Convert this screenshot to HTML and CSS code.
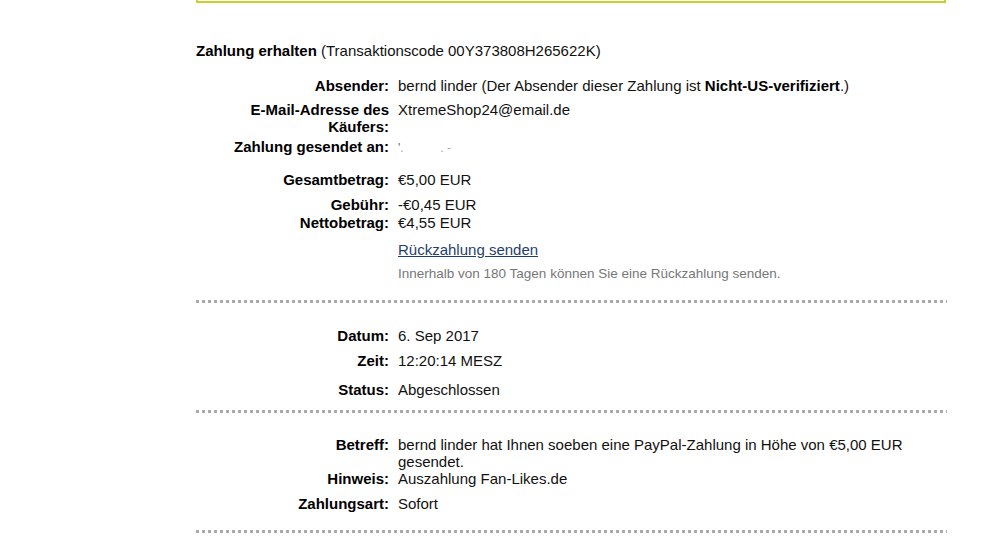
FILE: index.html
```html
<!DOCTYPE html>
<html lang="de">
<head>
<meta charset="utf-8">
<title>Zahlung erhalten</title>
<link rel="stylesheet" href="styles.css">
</head>
<body>
<div class="page">
  <div class="notice"></div>

  <h2 class="title"><strong>Zahlung erhalten</strong> (Transaktionscode 00Y373808H265622K)</h2>

  <section class="block first">
    <div class="row"><div class="label">Absender:</div><div class="value">bernd linder (Der Absender dieser Zahlung ist <strong>Nicht-US-verifiziert</strong>.)</div></div>
    <div class="row g7"><div class="label">E-Mail-Adresse des Käufers:</div><div class="value">XtremeShop24@email.de</div></div>
    <div class="row g3"><div class="label">Zahlung gesendet an:</div><div class="value"><span class="redacted">'</span><span class="redacted dots">.&nbsp;&nbsp;&nbsp;&nbsp;&nbsp;&nbsp;&nbsp;&nbsp;&nbsp;&nbsp;&nbsp;.&nbsp;-</span></div></div>
    <div class="row g14"><div class="label">Gesamtbetrag:</div><div class="value">€5,00 EUR</div></div>
    <div class="row g8"><div class="label">Gebühr:</div><div class="value">-€0,45 EUR</div></div>
    <div class="row g1"><div class="label">Nettobetrag:</div><div class="value">€4,55 EUR</div></div>
    <div class="row g10"><div class="label"></div><div class="value"><a class="link" href="#">Rückzahlung senden</a></div></div>
    <div class="row g7"><div class="label"></div><div class="value hint">Innerhalb von 180 Tagen können Sie eine Rückzahlung senden.</div></div>
  </section>

  <section class="block second">
    <div class="row"><div class="label">Datum:</div><div class="value">6. Sep 2017</div></div>
    <div class="row g8"><div class="label">Zeit:</div><div class="value">12:20:14 MESZ</div></div>
    <div class="row g12"><div class="label">Status:</div><div class="value">Abgeschlossen</div></div>
  </section>

  <section class="block third">
    <div class="row"><div class="label">Betreff:</div><div class="value">bernd linder hat Ihnen soeben eine PayPal-Zahlung in Höhe von €5,00 EUR gesendet.</div></div>
    <div class="row"><div class="label">Hinweis:</div><div class="value">Auszahlung Fan-Likes.de</div></div>
    <div class="row g8"><div class="label">Zahlungsart:</div><div class="value">Sofort</div></div>
  </section>
</div>
</body>
</html>
```

FILE: styles.css
```css
html, body {
  margin: 0;
  padding: 0;
  background: #fff;
}

body {
  font-family: "Liberation Sans", Arial, sans-serif;
  font-size: 15px;
  line-height: 17px;
  color: #111;
}

.page {
  width: 751px;
  margin-left: 196px;
}

.notice {
  width: 746px;
  height: 1px;
  border: 2px solid #c8d12c;
  border-top: 0;
}

.title {
  margin: 39px 0 0 0;
  font-size: 15px;
  line-height: 17px;
  font-weight: normal;
  color: #111;
}

.title strong {
  color: #000;
}

.block {
  background-image: linear-gradient(to right, #a9a9a9 3px, transparent 3px);
  background-size: 6px 3px;
  background-repeat: repeat-x;
  background-position: left bottom;
}

.block.first {
  padding-top: 18px;
  padding-bottom: 21px;
}

.block.second {
  padding-top: 24px;
  padding-bottom: 15px;
}

.block.third {
  padding-top: 23px;
  padding-bottom: 21px;
}

.row {
  display: grid;
  grid-template-columns: 193px 1fr;
  column-gap: 9px;
}

.label {
  text-align: right;
  font-weight: bold;
  color: #000;
}

.value {
  color: #111;
}

.value strong {
  color: #000;
}

.g1 { margin-top: 1px; }
.g3 { margin-top: 3px; }
.g7 { margin-top: 7px; }
.g8 { margin-top: 8px; }
.g10 { margin-top: 10px; }
.g12 { margin-top: 12px; }
.g14 { margin-top: 14px; }

.link {
  color: #1f3f6e;
  text-decoration: underline;
}

.hint {
  font-size: 13.5px;
  color: #777;
}

.redacted {
  color: #666;
  font-size: 12px;
}

.dots {
  color: #9aa;
}
```
